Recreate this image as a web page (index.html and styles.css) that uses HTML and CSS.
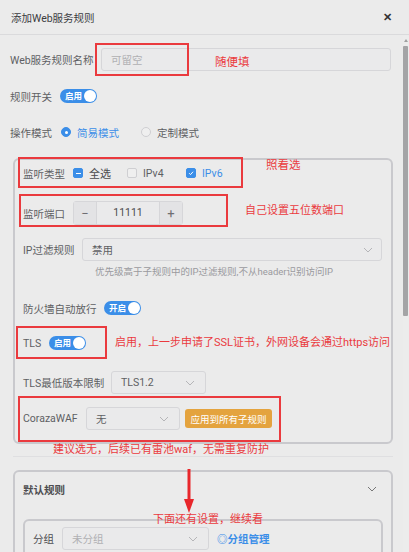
FILE: index.html
```html
<!DOCTYPE html>
<html lang="zh">
<head>
<meta charset="utf-8">
<link rel="stylesheet" href="styles.css">
</head>
<body>
<div class="dialog">
  <div class="header">
    <span class="title">添加Web服务规则</span>
    <span class="close">✕</span>
  </div>
  <div class="body">
    <div class="row r-name">
      <span class="label">Web服务规则名称</span>
      <div class="input wide"><span class="ph">可留空</span></div>
    </div>
    <div class="row r-switch">
      <span class="label">规则开关</span>
      <span class="toggle"><span class="ttext">启用</span><span class="knob"></span></span>
    </div>
    <div class="row r-mode">
      <span class="label">操作模式</span>
      <span class="radio on"></span><span class="rtext blue">简易模式</span>
      <span class="radio"></span><span class="rtext">定制模式</span>
    </div>

    <div class="card card1">
      <div class="row c-type">
        <span class="label">监听类型</span>
        <span class="cb ind"><span class="dash"></span></span><span class="cbtext t1 dark">全选</span>
        <span class="cb"></span><span class="cbtext t2">IPv4</span>
        <span class="cb chk"><svg viewBox="0 0 10 10" width="10" height="10"><path d="M2.6 5.2 L4.4 7 L7.6 3.4" fill="none" stroke="#fff" stroke-width="1.2"/></svg></span><span class="cbtext blue">IPv6</span>
      </div>
      <div class="row c-port">
        <span class="label">监听端口</span>
        <div class="num">
          <span class="nbtn">−</span>
          <span class="nval">11111</span>
          <span class="nbtn">+</span>
        </div>
      </div>
      <div class="row c-ip">
        <span class="label">IP过滤规则</span>
        <div class="input select ipsel"><span class="val">禁用</span><svg class="chev" viewBox="0 0 10 6" width="10" height="6"><path d="M1 1 L5 5 L9 1" fill="none" stroke="#b5b5b8" stroke-width="1"/></svg></div>
      </div>
      <div class="hint">优先级高于子规则中的IP过滤规则,不从header识别访问IP</div>
      <div class="row c-fw">
        <span class="label">防火墙自动放行</span>
        <span class="toggle"><span class="ttext">开启</span><span class="knob"></span></span>
      </div>
      <div class="row c-tls">
        <span class="label">TLS</span>
        <span class="toggle"><span class="ttext">启用</span><span class="knob"></span></span>
      </div>
      <div class="row c-tlsv">
        <span class="label">TLS最低版本限制</span>
        <div class="input select tlssel"><span class="val">TLS1.2</span><svg class="chev" viewBox="0 0 10 6" width="10" height="6"><path d="M1 1 L5 5 L9 1" fill="none" stroke="#b5b5b8" stroke-width="1"/></svg></div>
      </div>
      <div class="row c-waf">
        <span class="label">CorazaWAF</span>
        <div class="input select wafsel"><span class="val">无</span><svg class="chev" viewBox="0 0 10 6" width="10" height="6"><path d="M1 1 L5 5 L9 1" fill="none" stroke="#b5b5b8" stroke-width="1"/></svg></div>
        <span class="obtn">应用到所有子规则</span>
      </div>
    </div>

    <div class="divider"></div>

    <div class="card card2">
      <div class="row c2-head">
        <span class="label bold">默认规则</span>
        <svg class="chev2" viewBox="0 0 10 6" width="10" height="6"><path d="M1 1 L5 5 L9 1" fill="none" stroke="#777" stroke-width="1"/></svg>
      </div>
      <div class="card inner">
        <div class="row c-group">
          <span class="label">分组</span>
          <div class="input select grpsel"><span class="ph">未分组</span><svg class="chev" viewBox="0 0 10 6" width="10" height="6"><path d="M1 1 L5 5 L9 1" fill="none" stroke="#b5b5b8" stroke-width="1"/></svg></div>
          <span class="link">◎分组管理</span>
        </div>
      </div>
    </div>
  </div>

  <div class="scrollbar"><span class="arrow"></span><span class="thumb"></span></div>

  <!-- annotations -->
  <div class="mark m1"></div>
  <div class="note n1">随便填</div>
  <div class="mark m2"></div>
  <div class="note n2">照看选</div>
  <div class="mark m3"></div>
  <div class="note n3">自己设置五位数端口</div>
  <div class="mark m4"></div>
  <div class="note n4">启用，上一步申请了SSL证书，外网设备会通过https访问</div>
  <div class="mark m5"></div>
  <div class="note n5">建议选无，后续已有雷池waf，无需重复防护</div>
  <svg class="arrowdown" viewBox="0 0 12 44" width="12" height="44"><path d="M6 0 L6 32" stroke="#e8262b" stroke-width="3"/><path d="M1 30 L11 30 L6 44 Z" fill="#e8262b"/></svg>
  <div class="note n6">下面还有设置，继续看</div>
</div>
</body>
</html>
```

FILE: styles.css
```css
* { box-sizing: border-box; }
html, body { margin: 0; padding: 0; }
body {
  width: 409px;
  height: 552px;
  overflow: hidden;
  background: #ebebeb;
  font-family: Roboto, "Noto Sans CJK SC", sans-serif;
  font-size: 10.5px;
  color: #5e5f63;
}
.dialog { position: relative; width: 409px; height: 552px; overflow: hidden; }

.header {
  height: 35px;
  display: flex;
  align-items: center;
  justify-content: space-between;
  padding: 0 17px 0 11px;
  border-bottom: 1px solid #dadadc;
}
.title { font-size: 10.5px; color: #3c3c3f; }
.close { font-size: 11px; color: #333; font-weight: bold; }

.body { padding: 0 0 0 10px; width: 400px; }
.row { display: flex; align-items: center; }
.label { white-space: nowrap; flex: none; }

.input {
  border: 1px solid #d6d6d9;
  border-radius: 3px;
  background: #eaeaeb;
  height: 23px;
  display: flex;
  align-items: center;
  padding: 0 9px;
  flex: none;
}
.ph { color: #b0b0b3; }
.val { color: #5e5f63; }

.r-name { margin-top: 13px; height: 23px; }
.r-name .label { width: 91px; }
.input.wide { width: 290px; }

.r-switch { margin-top: 18px; height: 14px; }
.r-switch .label { width: 50px; }

.toggle {
  position: relative;
  width: 37px;
  height: 14px;
  border-radius: 7px;
  background: #3b8ee8;
  display: inline-flex;
  align-items: center;
  flex: none;
}
.ttext { color: #fff; font-size: 8.5px; font-weight: bold; padding-left: 5px; line-height: 14px; }
.knob {
  position: absolute;
  right: 1px; top: 1px;
  width: 12px; height: 12px;
  border-radius: 50%;
  background: #fff;
}

.r-mode { margin-top: 22px; height: 14px; }
.r-mode .label { width: 51px; }
.radio {
  width: 10px; height: 10px;
  border-radius: 50%;
  border: 1px solid #cfcfd2;
  background: #efefef;
  margin-right: 6px;
  flex: none;
}
.radio.on { background: #3b8ee8; border-color: #3b8ee8; position: relative; }
.radio.on::after {
  content: ""; position: absolute; left: 2.5px; top: 2.5px;
  width: 3px; height: 3px; border-radius: 50%; background: #fff;
}
.rtext { width: 64px; }
.blue { color: #3b8ee8; }
.dark { color: #4a4a4d; }

.card {
  border: 2px solid #c9c9cd;
  border-radius: 6px;
}
.card1 {
  margin-top: 19px;
  margin-left: 3px;
  width: 380px;
  height: 286px;
  padding: 6px 0 0 8px;
}
.c-type { height: 14px; }
.c-type .label { width: 50px; }
.cb {
  width: 10px; height: 10px;
  border-radius: 2px;
  border: 1px solid #cfcfd2;
  background: #efefef;
  margin-right: 6px;
  display: inline-flex; align-items: center; justify-content: center;
  flex: none;
}
.cb.ind, .cb.chk { background: #3b8ee8; border-color: #3b8ee8; }
.cb .dash { width: 5px; height: 1px; background: #fff; }
.cb svg { display: block; }
.cbtext.t1 { width: 38px; font-size: 11px; }
.cbtext.t2 { width: 43px; }

.c-port { margin-top: 21px; height: 24px; }
.c-port .label { width: 50px; }
.num {
  display: flex;
  width: 110px;
  height: 24px;
  border: 1px solid #d6d6d9;
  border-radius: 3px;
  background: #eaeaeb;
  flex: none;
}
.nbtn {
  width: 23px;
  display: flex; align-items: center; justify-content: center;
  background: #e3e3e5;
  color: #6e6e72;
  font-size: 13px;
}
.nbtn:first-child { border-right: 1px solid #d6d6d9; }
.nbtn:last-child { border-left: 1px solid #d6d6d9; }
.nval { flex: 1; text-align: center; line-height: 22px; color: #4a4a4d; }

.c-ip { margin-top: 13px; height: 23px; }
.c-ip .label { width: 59px; }
.select { justify-content: space-between; }
.chev { flex: none; }
.ipsel { width: 300px; padding-right: 8px; }

.hint { margin-top: 4px; margin-left: 72px; font-size: 9.5px; color: #9a9a9e; line-height: 14px; }

.c-fw { margin-top: 22px; height: 14px; }
.c-fw .label { width: 81px; }

.c-tls { margin-top: 21px; height: 14px; }
.c-tls .label { width: 26px; }

.c-tlsv { margin-top: 21px; height: 23px; }
.c-tlsv .label { width: 88px; }
.tlssel { width: 95px; padding-right: 10px; }

.c-waf { margin-top: 13px; height: 23px; }
.c-waf .label { width: 63px; }
.wafsel { width: 94px; padding-right: 10px; }
.obtn {
  margin-left: 5px;
  background: #e4a33e;
  color: #fff;
  font-size: 9.5px;
  height: 19px;
  width: 87px;
  border-radius: 3px;
  display: flex; align-items: center; justify-content: center;
  flex: none;
}

.divider { margin-top: 12px; margin-left: 3px; width: 380px; height: 1px; background: #dfdfe1; }

.card2 {
  margin-top: 13px;
  margin-left: 3px;
  width: 380px;
  height: 120px;
  padding: 10px 8px 0 8px;
}
.c2-head { justify-content: space-between; height: 14px; padding-right: 6px; }
.bold { font-weight: bold; color: #4d4d50; }
.inner {
  margin-top: 23px;
  margin-left: 0;
  width: 360px;
  height: 60px;
  padding: 6px 0 0 8px;
}
.c-group { height: 23px; }
.c-group .label { width: 29px; color: #4d4d50; }
.grpsel { width: 147px; padding-right: 10px; }
.link { margin-left: 8px; color: #3b8ee8; font-weight: bold; }

.scrollbar {
  position: absolute;
  right: 0; top: 36px;
  width: 6px; height: 516px;
  background: #ececec;
}
.scrollbar .arrow {
  position: absolute; left: 1px; top: 3px;
  width: 0; height: 0;
  border-left: 2px solid transparent;
  border-right: 2px solid transparent;
  border-bottom: 3px solid #a0a0a0;
}
.scrollbar .thumb {
  position: absolute; left: 0; top: 10px;
  width: 5px; height: 270px;
  background: #a4a4a6;
  border-radius: 1px;
}

.mark { position: absolute; border: 2px solid #ea3a3e; }
.m1 { left: 95px; top: 43px; width: 94px; height: 33px; }
.m2 { left: 18px; top: 157px; width: 225px; height: 31px; }
.m3 { left: 19px; top: 194px; width: 209px; height: 33px; }
.m4 { left: 16px; top: 326px; width: 91px; height: 33px; }
.m5 { left: 18px; top: 396px; width: 263px; height: 46px; }

.note { position: absolute; color: #ea3a3e; font-size: 11px; white-space: nowrap; line-height: 16px; }
.n1 { left: 215px; top: 54px; font-size: 11.5px; }
.n2 { left: 266px; top: 157px; font-size: 11.5px; }
.n3 { left: 245px; top: 203px; }
.n4 { left: 115px; top: 335px; }
.n5 { left: 53px; top: 442px; }
.n6 { left: 153px; top: 512px; }
.arrowdown { position: absolute; left: 183px; top: 469px; }
```
